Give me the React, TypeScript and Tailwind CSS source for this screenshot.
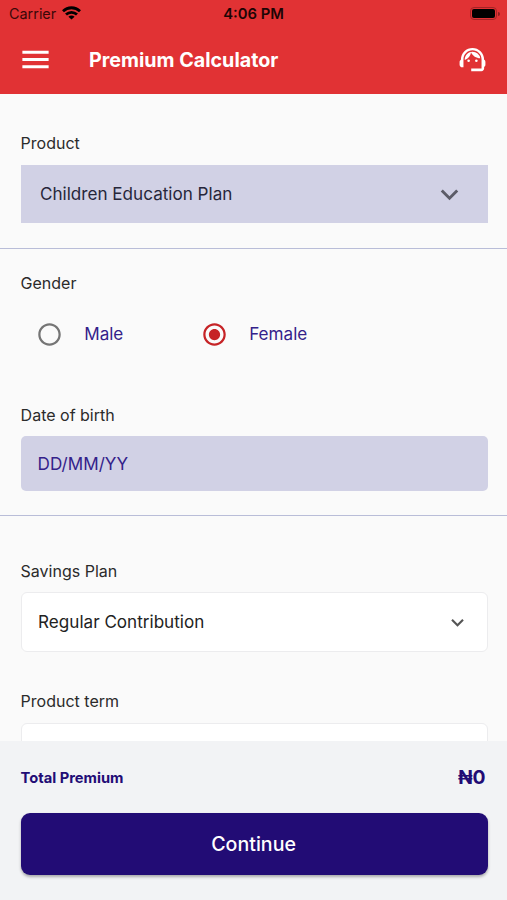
import React from 'react';
import {
    MdKeyboardArrowDown,
    MdMenu,
    MdRadioButtonChecked,
    MdRadioButtonUnchecked,
    MdSupportAgent,
} from 'react-icons/md';

const genders = [
    { label: 'Male', selected: false },
    { label: 'Female', selected: true },
];

const FieldLabel: React.FC<{ children: React.ReactNode }> = ({ children }) => (
    <div className="text-base leading-6 text-[#2b2b2b]">{children}</div>
);

const StatusBar: React.FC = () => (
    <div className="grid h-7 grid-cols-3 items-center pl-[9px] pr-[7px] text-black">
        <div className="flex items-center gap-[6px] text-[14.4px] text-[#3a0808]">
            <span>Carrier</span>
            <svg className="-mt-[2px] h-[14px] w-[19px] text-black" viewBox="0 0 19 14" fill="none" stroke="currentColor" strokeWidth="2.8">
                <path d="M1 5.2C5.8 0.6 13.2 0.6 18 5.2" />
                <path d="M4 8.6C7.2 5.6 11.8 5.6 15 8.6" />
                <path d="M9.5 13.6L6.4 10.8C8.2 9.2 10.8 9.2 12.6 10.8Z" fill="currentColor" stroke="none" />
            </svg>
        </div>
        <div className="pr-[2px] text-center text-[14.8px] font-semibold text-[#1c0505]">4:06 PM</div>
        <div className="flex items-center justify-end gap-px">
            <div className="-mt-px h-[13px] w-[27px] rounded-[4px] border border-[#a32426] p-px">
                <div className="h-full w-full rounded-[2px] bg-black" />
            </div>
            <div className="-mt-px h-[4px] w-[2px] rounded-r-full bg-[#8d1f21]" />
        </div>
    </div>
);

const Header: React.FC = () => (
    <header className="h-[94px] shrink-0 bg-[#e13234]">
        <StatusBar />
        <div className="flex h-[63px] items-center pl-[18px] pr-[19px] text-white">
            <button type="button" aria-label="Menu">
                <MdMenu className="h-[35px] w-[35px]" />
            </button>
            <h1 className="ml-9 flex-1 pt-[2px] text-[19.7px] font-bold">Premium Calculator</h1>
            <button type="button" aria-label="Support">
                <MdSupportAgent className="h-[31px] w-[31px]" />
            </button>
        </div>
    </header>
);

export default function App() {
    return (
        <div className="flex h-[900px] w-[507px] flex-col overflow-hidden bg-[#fafafa] font-['Inter',sans-serif]">
            <Header />

            <main className="min-h-0 flex-1 overflow-hidden">
                <section className="border-b border-[#b9bdd8] pb-[25px] pl-[20.6px] pr-[19.4px] pt-[37px]">
                    <FieldLabel>Product</FieldLabel>
                    <div className="mt-[10px] flex h-[58px] items-center justify-between bg-[#d1d1e5] pl-[19.4px] pr-[21px]">
                        <span className="text-[17.1px] text-[#26263a]">Children Education Plan</span>
                        <MdKeyboardArrowDown className="h-[35px] w-[35px] text-[#5c5c68]" />
                    </div>
                </section>

                <section className="border-b border-[#b9bdd8] pb-6 pl-[20.6px] pr-[19.4px] pt-[22px]">
                    <FieldLabel>Gender</FieldLabel>
                    <div className="mt-[25px] flex pl-[15.6px]">
                        {genders.map(({ label, selected }) => (
                            <label key={label} className="flex h-7 w-[165px] items-center gap-[21px] text-[17.1px] text-[#34218a]">
                                {selected ? (
                                    <MdRadioButtonChecked className="h-[27px] w-[27px] text-[#c62326]" />
                                ) : (
                                    <MdRadioButtonUnchecked className="h-[27px] w-[27px] text-[#757575]" />
                                )}
                                {label}
                            </label>
                        ))}
                    </div>
                    <div className="mt-[55px]">
                        <FieldLabel>Date of birth</FieldLabel>
                    </div>
                    <div className="mt-[9px] flex h-[55px] items-center rounded-[5px] bg-[#d1d1e5] px-[17px] text-[17.1px] text-[#34218a]">
                        DD/MM/YY
                    </div>
                </section>

                <section className="pl-[20.6px] pr-[19.4px] pt-[43px]">
                    <FieldLabel>Savings Plan</FieldLabel>
                    <div className="mt-[9px] flex h-[60px] items-center justify-between rounded-[6px] border border-[#ececee] bg-white pl-[16.5px] pr-[17px]">
                        <span className="text-[17.1px] text-[#222222]">Regular Contribution</span>
                        <MdKeyboardArrowDown className="h-[25px] w-[25px] text-[#555555]" />
                    </div>
                    <div className="mt-[37px]">
                        <FieldLabel>Product term</FieldLabel>
                    </div>
                    <div className="mt-[10px] h-[60px] rounded-[6px] border border-[#ececee] bg-white" />
                </section>
            </main>

            <footer className="h-[159px] shrink-0 bg-[#f2f3f5] pl-[20.6px] pr-[19.4px] pt-[22px]">
                <div className="flex h-7 items-center justify-between pr-[2px] font-bold text-[#220c75]">
                    <span className="pt-[3px] text-[14.7px]">Total Premium</span>
                    <span className="text-[19.3px]">₦0</span>
                </div>
                <button
                    type="button"
                    className="mt-[22px] h-[62px] w-full rounded-[9px] bg-[#220c75] pr-px pt-[2px] text-[19.6px] font-medium text-white shadow-[0_2px_3px_rgba(0,0,0,0.3)]"
                >
                    Continue
                </button>
            </footer>
        </div>
    );
}
